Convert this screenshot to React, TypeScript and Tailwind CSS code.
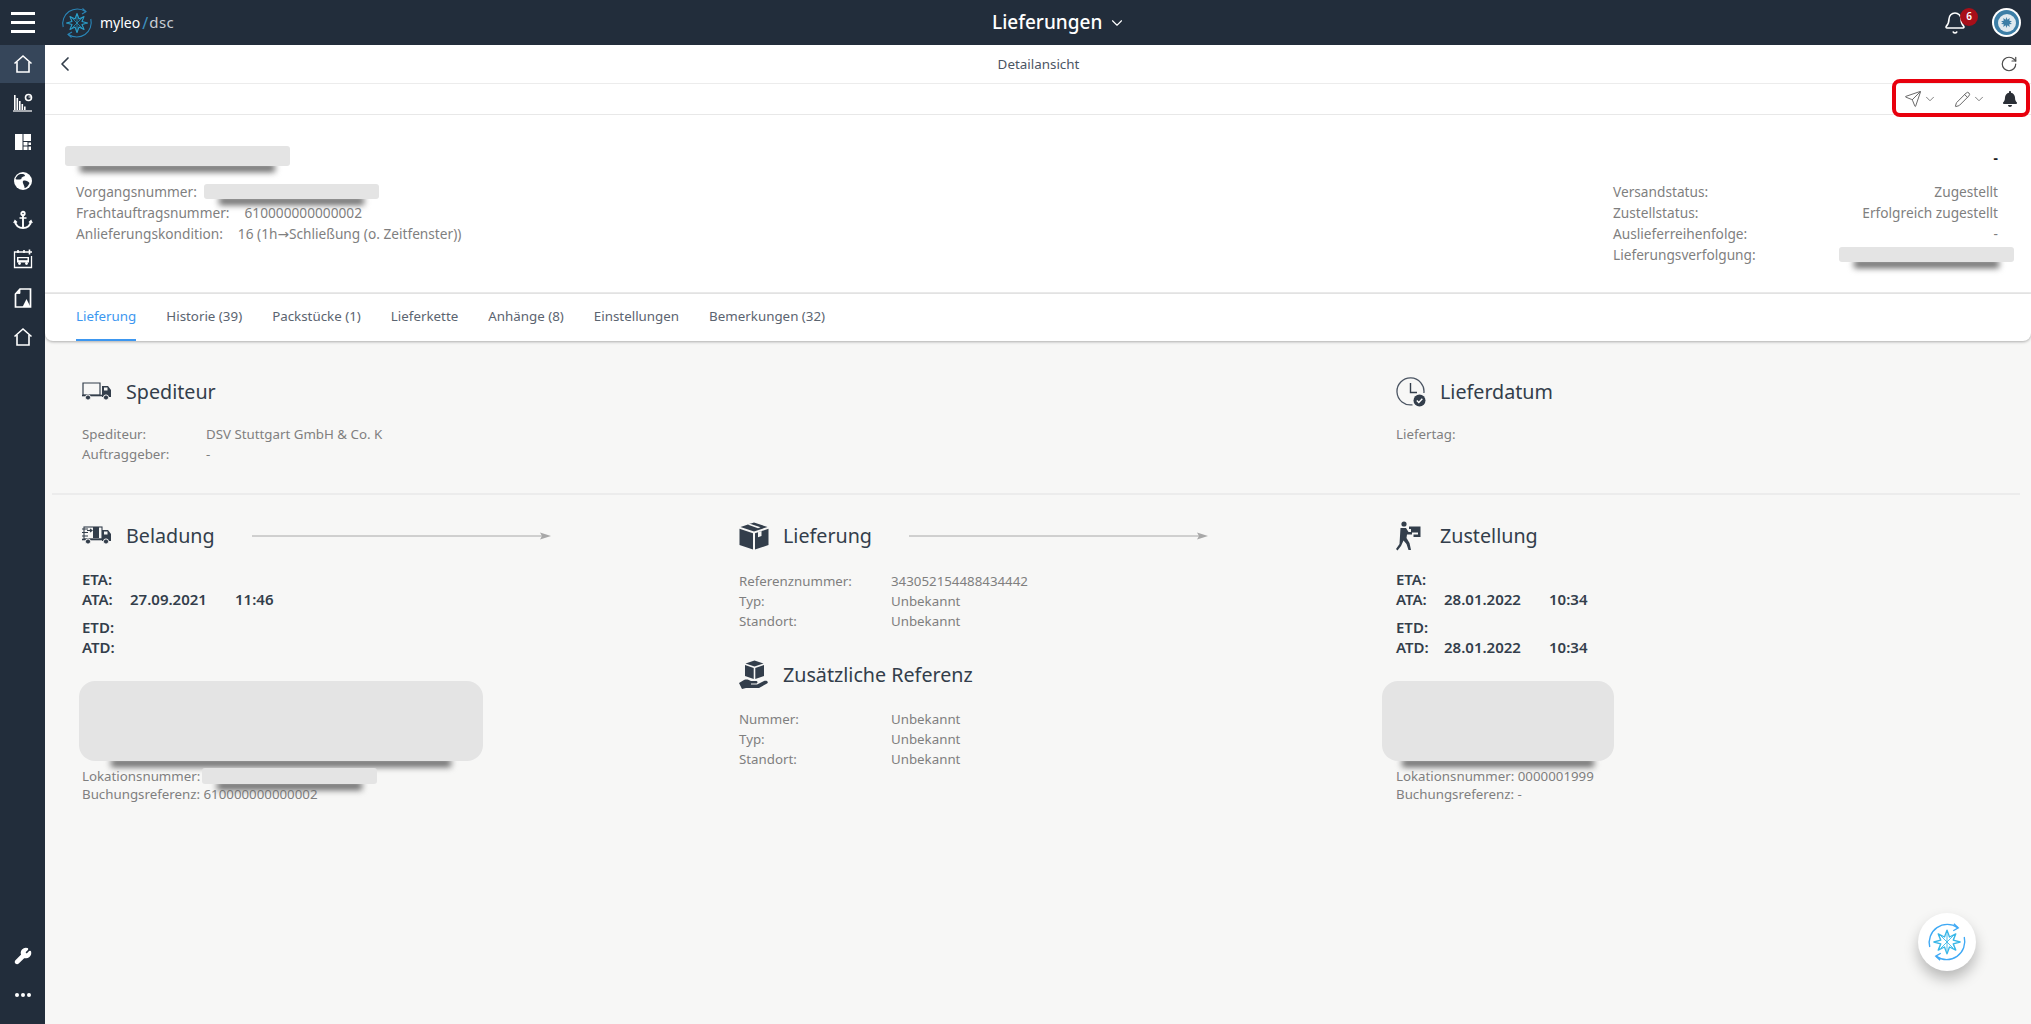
import React from "react";
import { ChevronDown, ChevronLeft, RotateCw, Bell, Pencil, Send, Wrench } from "lucide-react";
import { FaBell } from "react-icons/fa";

const Home = () => (
  <svg width="20" height="20" viewBox="0 0 20 20" fill="none" stroke="white" strokeWidth="1.6">
    <path d="M1.5 9.5 L10 2 L18.5 9.5" />
    <path d="M4 8 V18 H16 V8" />
  </svg>
);

const ChartIcon = () => (
  <svg width="20" height="20" viewBox="0 0 20 20" fill="white">
    <rect x="1" y="2" width="1.6" height="15" />
    <rect x="3.5" y="5" width="1.6" height="12" />
    <rect x="6" y="8" width="1.6" height="9" />
    <rect x="8.5" y="11" width="1.6" height="6" />
    <rect x="11" y="13.5" width="1.6" height="3.5" />
    <rect x="0" y="17.4" width="19" height="1.2" />
    <circle cx="15.5" cy="4.5" r="3" fill="none" stroke="white" strokeWidth="1.6" />
    <path d="M15.5 4.5 h3 v-1 h-3z" />
  </svg>
);

const LayoutIcon = () => (
  <svg width="18" height="18" viewBox="0 0 18 18" fill="white">
    <rect x="1" y="1" width="7.5" height="16" />
    <rect x="9.5" y="1" width="7.5" height="7" />
    <rect x="9.5" y="9" width="4" height="3.5" />
    <rect x="14.5" y="9.5" width="2.5" height="2.5" />
    <rect x="9.5" y="13.5" width="4" height="3.5" />
    <rect x="14.5" y="13.5" width="2.5" height="3.5" />
  </svg>
);

const GlobeIcon = () => (
  <svg width="20" height="20" viewBox="0 0 20 20">
    <circle cx="10" cy="10" r="9" fill="white" />
    <path d="M6 3.5 C9 2.5 12 3 12 5 C10 6 8 6 8.5 8 C6.5 8.5 4 9 2.5 8 C3 6 4.5 4.5 6 3.5Z M10 10 C12 9 15 10 16.5 12 C15.5 15 13 17 11.5 17 C12 15 9 12 10 10Z" fill="#222d3b" />
  </svg>
);

const AnchorIcon = () => (
  <svg width="20" height="20" viewBox="0 0 20 20" fill="none" stroke="white" strokeWidth="1.9">
    <circle cx="10" cy="3.5" r="1.7" />
    <path d="M10 5.5 V18" />
    <path d="M6.5 8 H13.5" strokeWidth="1.5" />
    <path d="M2 11 C2 15.5 6 18 10 18 C14 18 18 15.5 18 11" />
    <path d="M0.8 13 L2 10.5 L4 12.5 M19.2 13 L18 10.5 L16 12.5" strokeWidth="1.3" />
  </svg>
);

const PlannerIcon = () => (
  <svg width="20" height="20" viewBox="0 0 20 20" fill="none" stroke="white" strokeWidth="1.3">
    <path d="M14 3 H1.5 V18.5 H18.5 V7" />
    <path d="M5 1 V4 M11 1 V4" strokeWidth="1.6" />
    <path d="M16.5 0.5 V5.5 M14 3 H19" strokeWidth="1.6" />
    <rect x="4" y="8" width="12" height="5.5" fill="white" stroke="none" />
    <rect x="5.5" y="9.2" width="9" height="2" fill="#222d3b" stroke="none" />
    <circle cx="6.5" cy="14.5" r="1.4" fill="white" stroke="none" />
    <circle cx="13.5" cy="14.5" r="1.4" fill="white" stroke="none" />
  </svg>
);

const DocIcon = () => (
  <svg width="18" height="20" viewBox="0 0 18 20" fill="none" stroke="white" strokeWidth="1.7">
    <path d="M6 1 H16.5 V19 H1.5 V6 Z" />
    <path d="M2 5.5 L6 5.5 L6 1.5 Z" fill="white" strokeWidth="0.8" />
    <path d="M8.5 19 L12.5 11 L16.5 19 Z" fill="white" stroke="none" />
  </svg>
);

const LogoStar = ({ stroke }: { stroke: string }) => (
  <g fill="none" stroke={stroke} strokeWidth="1.1" strokeLinejoin="round">
    <path d="M16 6.5 L18 12 L23 9.5 L21 14.5 L26.5 16 L21 17.5 L23 22.5 L18 20 L16 25.5 L14 20 L9 22.5 L11 17.5 L5.5 16 L11 14.5 L9 9.5 L14 12 Z" />
    <path d="M11 11 L21 21 M21 11 L11 21 M16 9 V23" strokeWidth="0.7" />
  </g>
);

const LogoIcon = ({ size, ring, star }: { size: number; ring: string; star: string }) => (
  <svg width={size} height={size} viewBox="0 0 32 32" fill="none">
    <path d="M24.5 4.5 A14.5 14.5 0 0 0 2.2 20" stroke={ring} strokeWidth="1.1" />
    <path d="M7.5 27.5 A14.5 14.5 0 0 0 29.8 12" stroke={ring} strokeWidth="1.1" />
    <path d="M21.5 1.5 L25 4.7 L21 7" stroke={ring} strokeWidth="1.1" />
    <path d="M10.5 30.5 L7 27.3 L11 25" stroke={ring} strokeWidth="1.1" />
    <LogoStar stroke={star} />
  </svg>
);

const Truck = ({ loaded }: { loaded?: boolean }) => (
  <svg width="30" height="20" viewBox="0 0 30 20" fill="none">
    {loaded ? (
      <>
        <path d="M0 3 H6 M0 6.5 H6 M0 10 H6" stroke="#333e4b" strokeWidth="1.2" />
        <path d="M5 4.5 H10 M8 3 L10 4.5 L8 6" stroke="#333e4b" strokeWidth="1.1" />
        <rect x="11" y="1" width="6" height="11" fill="#333e4b" />
        <rect x="2" y="1" width="18" height="12" stroke="#333e4b" strokeWidth="1.1" />
      </>
    ) : (
      <path d="M1 1 H18 V13 H1 Z" stroke="#333e4b" strokeWidth="1.2" />
    )}
    <path d="M20 4 H26 L29 8 V15 H20 Z" fill="#333e4b" />
    <rect x="22" y="5.5" width="3.5" height="3" fill="#f7f7f6" />
    <path d="M0 13.5 H20" stroke="#333e4b" strokeWidth="1.6" />
    <circle cx="6" cy="15.5" r="2.6" fill="#333e4b" stroke="#f7f7f6" />
    <circle cx="24" cy="15.5" r="2.6" fill="#333e4b" stroke="#f7f7f6" />
  </svg>
);

const BoxIcon = () => (
  <svg width="30" height="28" viewBox="0 0 30 28" fill="#333e4b">
    <path d="M15 0.5 L28.5 5 L15 9.5 L1.5 5Z M8.5 2.5 L11 1.7 L21.5 5.3 L19 6.2Z" fillRule="evenodd" />
    <path d="M0.5 6.8 L14 11.3 V27.5 L0.5 23Z" />
    <path d="M29.5 6.8 L16 11.3 V27.5 L29.5 23Z" />
    <path d="M19 10.3 L22.5 9.1 V14 L19 15.2Z" fill="#f7f7f6" />
  </svg>
);

const ClockCheck = () => (
  <svg width="30" height="30" viewBox="0 0 30 30" fill="none">
    <path d="M16.5 27.8 A13.5 13.5 0 1 1 27.9 16" stroke="#4b5563" strokeWidth="1.3" />
    <path d="M14.5 6 V15.5 H21" stroke="#333e4b" strokeWidth="1.4" />
    <circle cx="23.5" cy="23.5" r="6" fill="#333e4b" />
    <path d="M20.8 23.5 L22.8 25.5 L26.3 21.8" stroke="white" strokeWidth="1.4" />
  </svg>
);

const Courier = () => (
  <svg width="26" height="30" viewBox="0 0 26 30" fill="#333e4b">
    <circle cx="8" cy="3" r="2.6" />
    <path d="M4.5 7 H10 L12.5 11 H16 V13.5 H11 L10.5 17 L13.5 22 L15 29 H12.5 L10.5 23 L7.5 19.5 L5 25 L1.5 29.5 L0 28 L3.5 23 Z" />
    <path d="M13 5.5 H24.5 V16 H17.5 V13.5 H22 V8 H13 Z" />
    <rect x="15" y="7.5" width="7" height="4" />
  </svg>
);

const HandBox = () => (
  <svg width="30" height="30" viewBox="0 0 30 30" fill="#333e4b">
    <path d="M15.5 0.5 L24.5 3.5 L15.5 6.5 L6.5 3.5Z" />
    <path d="M6 5 L14.7 8 V19 L6 16Z M16.3 8 L25 5 V16 L16.3 19Z" />
    <path d="M0 23 L5 20 C8 19 10 20 12 21 H17 C19 21 19 23.5 17 23.5 H12 V24.5 H18 L25 21 C28 20 30 22 28 23.5 L20 28 H7 L3 29 Z" />
  </svg>
);

const AvatarStar = () => (
  <svg width="11" height="11" viewBox="0 0 12 12" fill="#3c7ea6">
    <path d="M6 0 L7 3 L9.5 1.2 L9 4 L12 4.5 L9.7 6 L12 7.5 L9 8 L9.5 10.8 L7 9 L6 12 L5 9 L2.5 10.8 L3 8 L0 7.5 L2.3 6 L0 4.5 L3 4 L2.5 1.2 L5 3Z" />
  </svg>
);

const Redact = ({ w, h, shadow = 15, radius = "rounded-[3px]", className = "" }: { w: number; h: number; shadow?: number; radius?: string; className?: string }) => (
  <div className={`relative shrink-0 ${className}`} style={{ width: w, height: h }}>
    <div className="absolute bottom-[-6px] h-[8px] bg-[#666] blur-[3px]" style={{ left: shadow, right: shadow }} />
    <div className={`absolute inset-0 bg-[#e4e4e4] ${radius}`} />
  </div>
);

const Arrow = () => (
  <svg width="300" height="10" viewBox="0 0 300 10">
    <path d="M0 5 H292" stroke="#a8a8a8" strokeWidth="1" />
    <path d="M288 1.5 L299 5 L288 8.5 L290 5Z" fill="#a8a8a8" />
  </svg>
);

const Heading = ({ icon, title, arrow }: { icon: React.ReactNode; title: string; arrow?: boolean }) => (
  <div className="flex items-center h-[30px]">
    <div className="w-[44px] flex items-center shrink-0">{icon}</div>
    <div className="text-[19.7px] leading-[30px] text-[#333e4b] w-[126px] shrink-0 whitespace-nowrap">{title}</div>
    {arrow && <Arrow />}
  </div>
);

const Row = ({ label, value, w }: { label: string; value?: string; w: number }) => (
  <div className="flex text-[13.3px] leading-[20px] text-[#7f7f7f]">
    <div className="shrink-0" style={{ width: w }}>{label}</div>
    <div className="whitespace-nowrap">{value}</div>
  </div>
);

const Times = ({ rows }: { rows: [string, string?, string?][] }) => (
  <div className="text-[15px] leading-[20px] font-semibold text-[#333e4b]">
    {rows.map(([l, d, t], i) => (
      <div key={l} className={`flex ${i === 2 ? "mt-[8px]" : ""}`}>
        <div className="w-[48px] shrink-0">{l}</div>
        <div className="w-[105px] shrink-0">{d}</div>
        <div>{t}</div>
      </div>
    ))}
  </div>
);

const tabs = ["Lieferung", "Historie (39)", "Packstücke (1)", "Lieferkette", "Anhänge (8)", "Einstellungen", "Bemerkungen (32)"];

export default function App() {
  return (
    <div className="w-[2031px] h-[1024px] overflow-hidden flex flex-col bg-[#f7f7f6] relative" style={{ fontFamily: '"Noto Sans", sans-serif' }}>
      {/* top bar */}
      <header className="h-[45px] shrink-0 bg-[#222d3b] flex items-center relative">
        <div className="w-[45px] flex flex-col items-center gap-[6px]">
          <div className="w-[24px] h-[3px] bg-white" />
          <div className="w-[24px] h-[3px] bg-white" />
          <div className="w-[24px] h-[3px] bg-white" />
        </div>
        <div className="ml-[16px] flex items-center">
          <LogoIcon size={32} ring="#2a86b8" star="#2aa0cc" />
          <span className="ml-[7px] text-[14px] text-white">myleo</span>
          <span className="ml-[2px] text-[16px] text-[#3f93c2]">/</span>
          <span className="ml-[1px] text-[15px] text-[#c9ced4] tracking-[0.5px]">dsc</span>
        </div>
        <div className="absolute left-[992px] top-0 h-[45px] flex items-center text-white text-[19px] font-medium">
          Lieferungen
          <ChevronDown className="ml-[6px]" size={18} strokeWidth={1.5} />
        </div>
        <div className="ml-auto flex items-center">
          <div className="relative mr-[25px]">
            <Bell size={24} color="white" strokeWidth={1.6} />
            <div className="absolute top-[-3px] left-[17px] w-[18px] h-[18px] rounded-full bg-[#a80f19] text-white text-[10px] font-semibold flex items-center justify-center">6</div>
          </div>
          <div className="w-[29px] h-[29px] rounded-full bg-white flex items-center justify-center mr-[10px]">
            <div className="w-[25px] h-[25px] rounded-full bg-[#3c7ea6] flex items-center justify-center">
              <div className="w-[18px] h-[18px] rounded-full bg-[#dfe9ef] flex items-center justify-center">
                <AvatarStar />
              </div>
            </div>
          </div>
        </div>
      </header>

      <div className="flex flex-1 min-h-0">
        {/* sidebar */}
        <aside className="w-[45px] shrink-0 bg-[#222d3b] flex flex-col items-center">
          <div className="w-full h-[38px] bg-[#36465a] flex items-center justify-center"><Home /></div>
          <div className="h-[39px] flex items-center justify-center"><ChartIcon /></div>
          <div className="h-[39px] flex items-center justify-center"><LayoutIcon /></div>
          <div className="h-[39px] flex items-center justify-center"><GlobeIcon /></div>
          <div className="h-[39px] flex items-center justify-center"><AnchorIcon /></div>
          <div className="h-[39px] flex items-center justify-center"><PlannerIcon /></div>
          <div className="h-[39px] flex items-center justify-center"><DocIcon /></div>
          <div className="h-[39px] flex items-center justify-center"><Home /></div>
          <div className="mt-auto h-[39px] flex items-center justify-center"><Wrench size={18} color="white" fill="white" /></div>
          <div className="h-[39px] mb-[10px] flex items-center justify-center gap-[2px]">
            <div className="w-[4px] h-[4px] rounded-full bg-white" />
            <div className="w-[4px] h-[4px] rounded-full bg-white" />
            <div className="w-[4px] h-[4px] rounded-full bg-white" />
          </div>
        </aside>

        <main className="flex-1 min-w-0 flex flex-col">
          {/* sub header */}
          <div className="h-[39px] shrink-0 bg-white border-b border-[#ececec] flex items-center pl-[8px] pr-[10px] relative">
            <ChevronLeft size={24} color="#333e4b" strokeWidth={1.7} />
            <div className="flex-1 text-center text-[13.4px] text-[#4b5563]">Detailansicht</div>
            <RotateCw size={18} color="#4b4b4b" strokeWidth={1.6} className="mr-[3px]" />
          </div>
          {/* toolbar */}
          <div className="h-[31px] shrink-0 bg-white border-b border-[#e8e8e8] flex items-center justify-end pr-[13px]">
            <Send size={18} color="#666" strokeWidth={1.3} />
            <ChevronDown size={14} color="#666" strokeWidth={1.4} className="ml-[1px]" />
            <Pencil size={17} color="#666" strokeWidth={1.4} className="ml-[17px]" />
            <ChevronDown size={14} color="#666" strokeWidth={1.4} className="ml-[1px]" />
            <FaBell size={16} color="#2b2f36" className="ml-[16px]" />
          </div>
          {/* header card */}
          <section className="h-[179px] shrink-0 bg-white flex justify-between border-b-2 border-[#ececec]">
            <div className="pl-[20px] pt-[31px]">
              <Redact w={225} h={20} />
              <div className="pl-[11px] mt-[15px] text-[13.7px] leading-[21px] text-[#7f7f7f]">
                <div className="flex items-center h-[21px]">Vorgangsnummer:<Redact w={175} h={15} className="ml-[7px]" /></div>
                <div className="flex">Frachtauftragsnummer:<span className="ml-[15px]">610000000000002</span></div>
                <div className="flex">Anlieferungskondition:<span className="ml-[15px]">16 (1h<span className="font-['DejaVu_Sans']">→</span>Schließung (o. Zeitfenster))</span></div>
              </div>
            </div>
            <div className="w-[418px] pt-[32px] text-[13.7px] leading-[21px] text-[#7f7f7f]">
              <div className="text-right pr-[33px] font-bold text-[#222] h-[24px]">-</div>
              <div className="mt-[10px] flex justify-between pr-[33px]"><span>Versandstatus:</span><span>Zugestellt</span></div>
              <div className="flex justify-between pr-[33px]"><span>Zustellstatus:</span><span>Erfolgreich zugestellt</span></div>
              <div className="flex justify-between pr-[33px]"><span>Auslieferreihenfolge:</span><span>-</span></div>
              <div className="flex justify-between items-center pr-[17px]"><span>Lieferungsverfolgung:</span><Redact w={175} h={15} /></div>
            </div>
          </section>
          {/* tabs */}
          <nav className="h-[47px] shrink-0 bg-white rounded-b-[8px] shadow-[0_1px_3px_rgba(0,0,0,0.3)] pl-[31px] flex gap-[30px] text-[13.35px] text-[#5b6470] relative z-10">
            {tabs.map((t, i) => (
              <div key={t} className={`h-[47px] flex items-center whitespace-nowrap border-b-2 ${i === 0 ? "text-[#3d97f0] border-[#3d97f0]" : "border-transparent"}`}>{t}</div>
            ))}
          </nav>
          {/* upper content */}
          <section className="h-[154px] shrink-0 ml-[7px] mr-[11px] border-b-2 border-[#ececec] pt-[36px] pl-[30px] grid grid-cols-[657px_657px_1fr]">
            <div>
              <Heading icon={<Truck />} title="Spediteur" />
              <div className="mt-[17px]">
                <Row label="Spediteur:" value="DSV Stuttgart GmbH & Co. K" w={124} />
                <Row label="Auftraggeber:" value="-" w={124} />
              </div>
            </div>
            <div />
            <div>
              <Heading icon={<ClockCheck />} title="Lieferdatum" />
              <div className="mt-[17px]"><Row label="Liefertag:" w={124} /></div>
            </div>
          </section>
          {/* lower content */}
          <section className="flex-1 ml-[7px] mr-[11px] pt-[26px] pl-[30px] grid grid-cols-[657px_657px_1fr] items-start">
            <div>
              <Heading icon={<Truck loaded />} title="Beladung" arrow />
              <div className="mt-[18px]">
                <Times rows={[["ETA:"], ["ATA:", "27.09.2021", "11:46"], ["ETD:"], ["ATD:"]]} />
              </div>
              <Redact w={404} h={80} shadow={32} radius="rounded-[16px]" className="-ml-[3px] mt-[24px]" />
              <div className="mt-[6px] text-[13.3px] leading-[18px] text-[#7f7f7f]">
                <div className="flex items-center h-[18px]">Lokationsnummer:<Redact w={175} h={16} className="ml-[2px]" /></div>
                <div>Buchungsreferenz: 610000000000002</div>
              </div>
            </div>
            <div>
              <Heading icon={<BoxIcon />} title="Lieferung" arrow />
              <div className="mt-[20px]">
                <Row label="Referenznummer:" value="343052154488434442" w={152} />
                <Row label="Typ:" value="Unbekannt" w={152} />
                <Row label="Standort:" value="Unbekannt" w={152} />
              </div>
              <div className="mt-[29px]">
                <Heading icon={<HandBox />} title="Zusätzliche Referenz" />
              </div>
              <div className="mt-[19px]">
                <Row label="Nummer:" value="Unbekannt" w={152} />
                <Row label="Typ:" value="Unbekannt" w={152} />
                <Row label="Standort:" value="Unbekannt" w={152} />
              </div>
            </div>
            <div>
              <Heading icon={<Courier />} title="Zustellung" />
              <div className="mt-[18px]">
                <Times rows={[["ETA:"], ["ATA:", "28.01.2022", "10:34"], ["ETD:"], ["ATD:", "28.01.2022", "10:34"]]} />
              </div>
              <Redact w={232} h={80} shadow={20} radius="rounded-[16px]" className="-ml-[14px] mt-[24px]" />
              <div className="mt-[6px] text-[13.3px] leading-[18px] text-[#7f7f7f]">
                <div>Lokationsnummer: 0000001999</div>
                <div>Buchungsreferenz: -</div>
              </div>
            </div>
          </section>
        </main>
      </div>

      {/* floating button */}
      <div className="absolute left-[1918px] top-[913px] w-[58px] h-[58px] rounded-full bg-white shadow-[0_8px_14px_rgba(0,0,0,0.25)] flex items-center justify-center">
        <LogoIcon size={40} ring="#3fa9f5" star="#39b7e8" />
      </div>
      {/* highlight */}
      <div className="absolute left-[1892px] top-[79px] w-[138px] h-[38px] border-[4px] border-[#e8000d] rounded-[8px]" />
    </div>
  );
}
